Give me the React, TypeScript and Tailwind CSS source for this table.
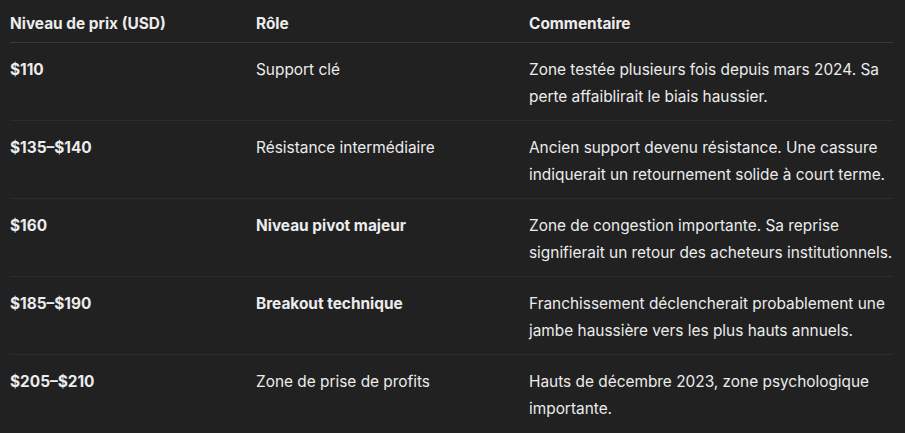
import React from "react";

type Row = { price: string; role: string; roleBold?: boolean; comment: string[] };

const rows: Row[] = [
  { price: "$110", role: "Support clé", comment: ["Zone testée plusieurs fois depuis mars 2024. Sa", "perte affaiblirait le biais haussier."] },
  { price: "$135–$140", role: "Résistance intermédiaire", comment: ["Ancien support devenu résistance. Une cassure", "indiquerait un retournement solide à court terme."] },
  { price: "$160", role: "Niveau pivot majeur", roleBold: true, comment: ["Zone de congestion importante. Sa reprise", "signifierait un retour des acheteurs institutionnels."] },
  { price: "$185–$190", role: "Breakout technique", roleBold: true, comment: ["Franchissement déclencherait probablement une", "jambe haussière vers les plus hauts annuels."] },
  { price: "$205–$210", role: "Zone de prise de profits", comment: ["Hauts de décembre 2023, zone psychologique", "importante."] },
];

export default function App() {
  return (
    <div
      className="w-[905px] h-[433px] overflow-hidden bg-[#212121] text-[#ececec] text-[15.4px] leading-[27px]"
      style={{ fontFamily: "Inter, 'Noto Sans', sans-serif" }}
    >
      <div className="ml-[10px] w-[883px]">
        <div className="grid grid-cols-[246px_273px_364px] pt-[10px] pb-[5px] border-b border-[#3a3a3a] font-bold">
          <div>Niveau de prix (USD)</div>
          <div>Rôle</div>
          <div>Commentaire</div>
        </div>
        {rows.map((r, i) => (
          <div
            key={i}
            className={`grid grid-cols-[246px_273px_364px] pt-[13px] pb-[10px] ${i < rows.length - 1 ? "border-b border-[#2c2c2c]" : ""}`}
          >
            <div className="font-bold">{r.price}</div>
            <div className={r.roleBold ? "font-bold" : ""}>{r.role}</div>
            <div>
              {r.comment.map((l, j) => (
                <div key={j} className="whitespace-nowrap">{l}</div>
              ))}
            </div>
          </div>
        ))}
      </div>
    </div>
  );
}
